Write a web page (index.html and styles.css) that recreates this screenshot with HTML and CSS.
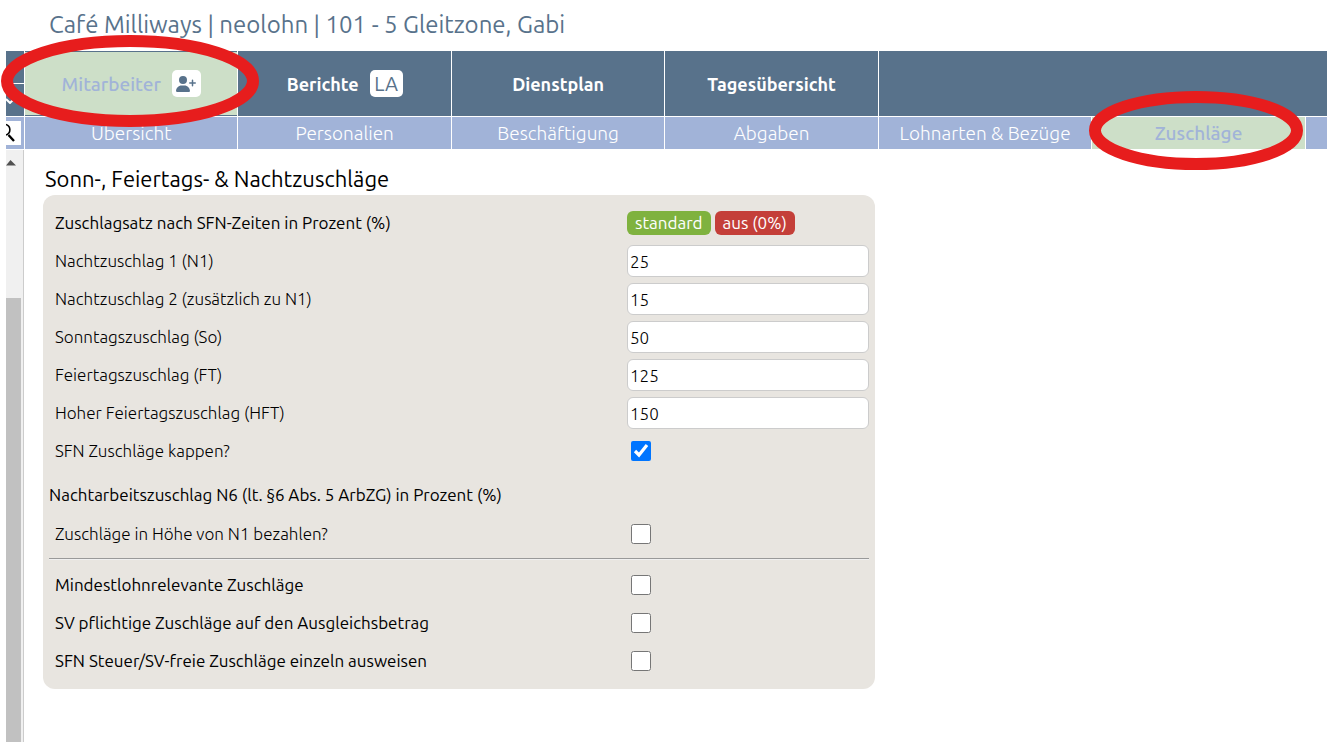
FILE: index.html
```html
<!DOCTYPE html>
<html lang="de">

<head>
    <meta charset="UTF-8">
    <meta name="viewport" content="width=device-width, initial-scale=1.0">
    <title>neolohn</title>
    <link rel="stylesheet" href="styles.css">
</head>

<body>
    <h1>Café Milliways | neolohn | 101 - 5 Gleitzone, Gabi</h1>

    <nav class="main-nav">
        <div class="side-tools">
            <span class="side-top"></span>
            <button class="side-toggle" aria-label="Ausklappen">
                <svg width="12" height="8" viewBox="0 0 12 8"><path d="M0 3 4 7 8 3" fill="none" stroke="#fff" stroke-width="2"/></svg>
            </button>
        </div>
        <div class="tab active">
            <a href="#">Mitarbeiter</a>
            <button class="badge" aria-label="Mitarbeiter anlegen">
                <svg width="20" height="16" viewBox="0 0 640 512" fill="#58728b"><path d="M96 128a128 128 0 1 1 256 0A128 128 0 1 1 96 128zM0 482.300C0 383.800 79.800 304 178.300 304h91.400C368.200 304 448 383.800 448 482.300c0 16.400-13.300 29.700-29.700 29.700H29.700C13.300 512 0 498.700 0 482.300zM504 312V248H440c-13.300 0-24-10.700-24-24s10.700-24 24-24h64V136c0-13.300 10.700-24 24-24s24 10.700 24 24v64h64c13.300 0 24 10.700 24 24s-10.700 24-24 24H552v64c0 13.300-10.700 24-24 24s-24-10.700-24-24z"/></svg>
            </button>
            <svg class="marker marker-main" viewBox="0 0 258 92"><ellipse cx="129" cy="46" rx="123" ry="40"/></svg>
        </div>
        <div class="tab"><a href="#">Berichte</a><button class="badge badge-text">LA</button></div>
        <div class="tab"><a href="#">Dienstplan</a></div>
        <div class="tab"><a href="#">Tagesübersicht</a></div>
        <div class="tab rest"></div>
    </nav>

    <nav class="sub-nav">
        <div class="search">
            <button aria-label="Suchen">
                <svg width="15" height="24" viewBox="0 0 15 24" fill="none" stroke="#000"><path d="M0 3.500A5.500 5.500 0 0 1 0 14" stroke-width="1.600"/><path d="M2.500 14 8 20" stroke-width="2.400"/></svg>
            </button>
        </div>
        <a href="#">Übersicht</a>
        <a href="#">Personalien</a>
        <a href="#">Beschäftigung</a>
        <a href="#">Abgaben</a>
        <a href="#">Lohnarten &amp; Bezüge</a>
        <a href="#" class="active">Zuschläge
            <svg class="marker marker-sub" viewBox="0 0 214 79"><ellipse cx="107" cy="39.500" rx="101" ry="33.500"/></svg>
        </a>
        <span class="rest"></span>
    </nav>

    <div class="content">
        <aside class="sidebar">
            <div class="scroll-track">
                <svg width="15" height="28" viewBox="0 0 15 28"><path d="M0 15.500 4.500 10 10 15.500z" fill="#505050"/></svg>
                <div class="scroll-thumb"></div>
            </div>
        </aside>

        <main>
            <h2>Sonn-, Feiertags- &amp; Nachtzuschläge</h2>
            <form class="panel">
                <div class="row strong">
                    <span>Zuschlagsatz nach SFN-Zeiten in Prozent (%)</span>
                    <div class="buttons">
                        <button type="button" class="green">standard</button>
                        <button type="button" class="red">aus (0%)</button>
                    </div>
                </div>
                <div class="row">
                    <label for="n1">Nachtzuschlag 1 (N1)</label>
                    <input type="text" id="n1" value="25">
                </div>
                <div class="row">
                    <label for="n2">Nachtzuschlag 2 (zusätzlich zu N1)</label>
                    <input type="text" id="n2" value="15">
                </div>
                <div class="row">
                    <label for="so">Sonntagszuschlag (So)</label>
                    <input type="text" id="so" value="50">
                </div>
                <div class="row">
                    <label for="ft">Feiertagszuschlag (FT)</label>
                    <input type="text" id="ft" value="125">
                </div>
                <div class="row">
                    <label for="hft">Hoher Feiertagszuschlag (HFT)</label>
                    <input type="text" id="hft" value="150">
                </div>
                <div class="row">
                    <label for="kappen">SFN Zuschläge kappen?</label>
                    <input type="checkbox" id="kappen" checked>
                </div>

                <h3>Nachtarbeitszuschlag N6 (lt. §6 Abs. 5 ArbZG) in Prozent (%)</h3>
                <div class="row">
                    <label for="n6">Zuschläge in Höhe von N1 bezahlen?</label>
                    <input type="checkbox" id="n6">
                </div>
                <hr>
                <div class="row strong">
                    <label for="mindestlohn">Mindestlohnrelevante Zuschläge</label>
                    <input type="checkbox" id="mindestlohn">
                </div>
                <div class="row strong">
                    <label for="sv">SV pflichtige Zuschläge auf den Ausgleichsbetrag</label>
                    <input type="checkbox" id="sv">
                </div>
                <div class="row strong">
                    <label for="einzeln">SFN Steuer/SV-freie Zuschläge einzeln ausweisen</label>
                    <input type="checkbox" id="einzeln">
                </div>
            </form>
        </main>
    </div>
</body>

</html>
```
FILE: styles.css
```css
* {
    box-sizing: border-box;
}

body {
    display: flex;
    flex-direction: column;
    min-height: 100vh;
    margin: 0;
    padding-left: 6px;
    overflow-x: hidden;
    background-color: #fff;
    color: #000;
    font-family: Ubuntu, "Open Sans", sans-serif;
    font-size: 17px;
    font-weight: 300;
}

h1,
h2,
h3 {
    margin: 0;
    font-weight: 400;
}

h1 {
    height: 51px;
    padding-left: 43px;
    color: #58728b;
    font-size: 24px;
    line-height: 50px;
}

a {
    color: inherit;
    text-decoration: none;
}

button {
    border: 0;
    padding: 0;
    font: inherit;
    cursor: pointer;
}

/* Navigation */
.main-nav,
.sub-nav {
    display: grid;
    grid-template-columns: 18px repeat(6, 10fr) 1fr;
    column-gap: 1px;
    margin-bottom: 1px;
}

.main-nav {
    grid-auto-rows: 65px;
}

.sub-nav {
    grid-auto-rows: 32px;
}

.side-tools {
    display: grid;
    grid-template-rows: 1fr 1fr;
    row-gap: 1px;
}

.side-top,
.side-toggle {
    background-color: #58728b;
}

.side-toggle {
    display: flex;
    align-items: center;
}

.tab {
    position: relative;
    display: flex;
    align-items: center;
    justify-content: center;
    gap: 11px;
    background-color: #58728b;
    color: #fff;
    font-size: 18px;
    font-weight: 700;
}

.tab.active {
    border-top: 1px solid #58728b;
    border-bottom: 1px solid #58728b;
    background-color: #cddfc8;
    color: #a1b3d8;
    font-size: 19px;
    font-weight: 500;
}

.tab.rest {
    grid-column: span 3;
}

.badge {
    display: flex;
    align-items: center;
    justify-content: center;
    width: 29px;
    height: 27px;
    border-radius: 5px;
    background-color: #fff;
    color: #58728b;
}

.badge-text {
    width: 33px;
    font-size: 20px;
    font-weight: 400;
}

.sub-nav > * {
    position: relative;
    display: flex;
    align-items: center;
    justify-content: center;
    background-color: #a1b3d8;
    color: #fff;
    font-size: 19px;
}

.sub-nav .active {
    background-color: #cddfc8;
    color: #a1b3d8;
    font-weight: 500;
}

.sub-nav .search {
    justify-content: flex-start;
}

.search button {
    width: 15px;
    height: 24px;
    background-color: #fff;
}

.search svg {
    display: block;
}

/* Red markers over the current tabs */
.marker {
    position: absolute;
    z-index: 1;
    fill: none;
    stroke: #e71d1d;
    stroke-width: 12px;
    pointer-events: none;
}

.marker-main {
    left: -24px;
    top: -17px;
    width: 258px;
    height: 92px;
}

.marker-sub {
    left: -3px;
    top: -26px;
    width: 214px;
    height: 79px;
}

/* Content */
.content {
    display: flex;
    flex: 1;
}

.sidebar {
    display: flex;
    width: 18px;
    border-right: 1px solid #ccc;
    background-color: #f0f0f0;
}

.scroll-track {
    display: flex;
    flex-direction: column;
    width: 15px;
}

.scroll-thumb {
    flex: 1;
    margin-top: 120px;
    background-color: #c1c1c1;
}

main {
    flex: 1;
    padding: 12px 19px;
}

h2 {
    padding-left: 2px;
    font-size: 22px;
    line-height: 33px;
}

.panel {
    max-width: 832px;
    padding: 9px 6px;
    border-radius: 12px;
    background-color: #e8e5e0;
}

.row {
    display: grid;
    grid-template-columns: 1fr 242px;
    align-items: center;
    height: 38px;
    padding-left: 6px;
    line-height: 18px;
}

.strong,
h3 {
    font-size: 17px;
    font-weight: 400;
}

h3 {
    padding-top: 5px;
    line-height: 40px;
}

.row input[type="text"] {
    width: 100%;
    height: 32px;
    padding: 0 2px;
    border: 1px solid #ccc;
    border-radius: 6px;
    background-color: #fff;
    font: inherit;
}

.row input[type="checkbox"] {
    width: 20px;
    height: 20px;
    margin: 0 4px;
}

.buttons {
    display: flex;
    gap: 4px;
}

.buttons button {
    height: 24px;
    padding: 0 8px;
    border-radius: 6px;
    color: #fff;
}

.green {
    background-color: #7fb23f;
}

.red {
    background-color: #c43f39;
}

hr {
    margin: 5px 0 6px;
    border: 0;
    border-top: 1px solid #999;
    border-bottom: 1px solid #f0f0f0;
}
```
